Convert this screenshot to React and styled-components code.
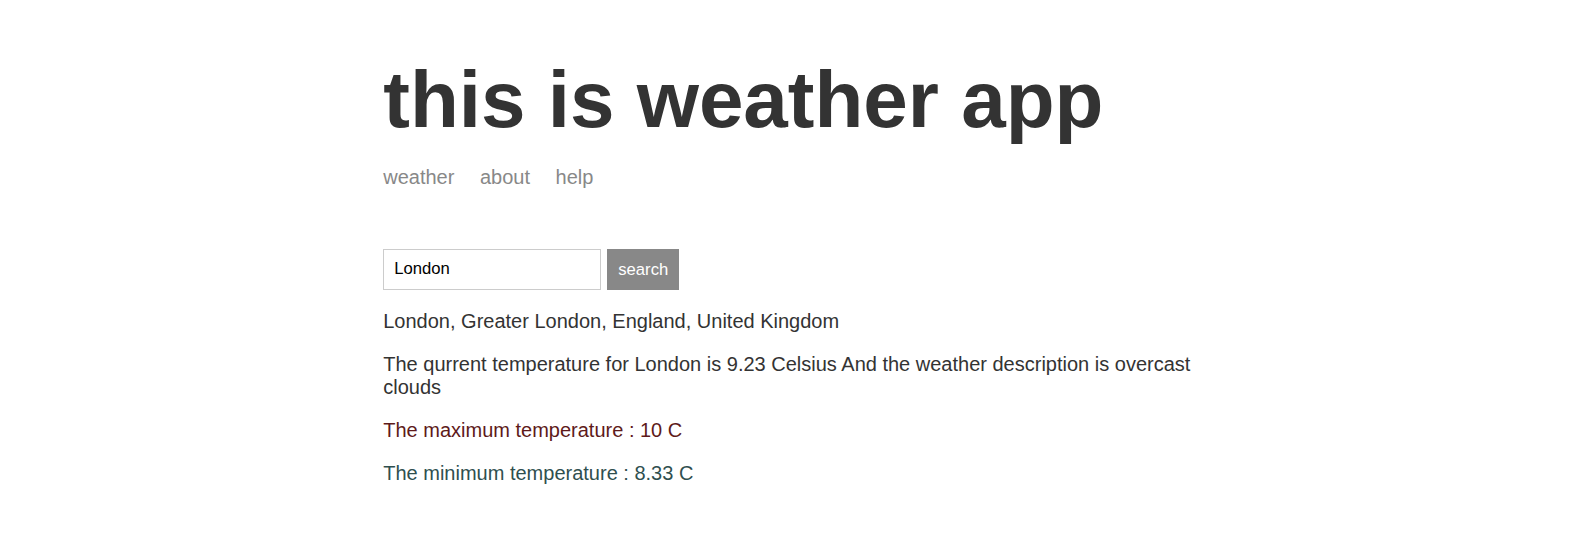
import React from "react";
import styled, { createGlobalStyle } from "styled-components";

const GlobalStyle = createGlobalStyle`
  html, body { margin: 0; padding: 0; background: #fff; }
  body {
    color: #333;
    font-family: "Liberation Sans", Arial, sans-serif;
  }
`;

const Page = styled.div`
  max-width: 812.5px;
  margin: 0 auto;
  padding: 0 20px;
  display: flex;
  flex-direction: column;
`;

const Header = styled.header`
  margin-top: 20px;
  margin-bottom: 60px;
`;

const Title = styled.h1`
  font-size: 80px;
  font-weight: bold;
  margin: 33.6px 0 20px;
  line-height: normal;
`;

const Nav = styled.nav`
  font-size: 20px;
  line-height: normal;
`;

const NavLink = styled.a`
  color: #888;
  margin-right: 20px;
  text-decoration: none;
`;

const Main = styled.main`
  font-size: 20px;
`;

const Form = styled.form`
  display: flex;
  align-items: stretch;
  gap: 6px;
  margin: 0;
`;

const Input = styled.input`
  box-sizing: border-box;
  width: 218px;
  height: 41.5px;
  border: 1.25px solid #ccc;
  padding: 10px;
  font-family: "Liberation Sans", Arial, sans-serif;
  font-size: 16.67px;
  color: #000;
  outline: none;
`;

const Button = styled.button`
  box-sizing: border-box;
  height: 41.5px;
  width: 72px;
  border: 1.25px solid #888;
  background: #888;
  color: #fff;
  padding: 10px;
  font-family: "Liberation Sans", Arial, sans-serif;
  font-size: 16.67px;
  cursor: pointer;
`;

const Message = styled.p`
  margin: 20px 0;
  line-height: normal;
  color: ${(p) => p.$color || "#333"};
`;

export default function App() {
  return (
    <>
      <GlobalStyle />
      <Page>
        <Header>
          <Title>this is weather app</Title>
          <Nav>
            <NavLink href="#">weather</NavLink>{" "}
            <NavLink href="#">about</NavLink>{" "}
            <NavLink href="#">help</NavLink>
          </Nav>
        </Header>
        <Main>
          <Form onSubmit={(e) => e.preventDefault()}>
            <Input defaultValue="London" />
            <Button type="submit">search</Button>
          </Form>
          <Message>London, Greater London, England, United Kingdom</Message>
          <Message>
            The qurrent temperature for London is 9.23 Celsius And the weather
            description is overcast clouds
          </Message>
          <Message $color="#5e1a1a">The maximum temperature : 10 C</Message>
          <Message $color="#2f4f4f">The minimum temperature : 8.33 C</Message>
        </Main>
      </Page>
    </>
  );
}
